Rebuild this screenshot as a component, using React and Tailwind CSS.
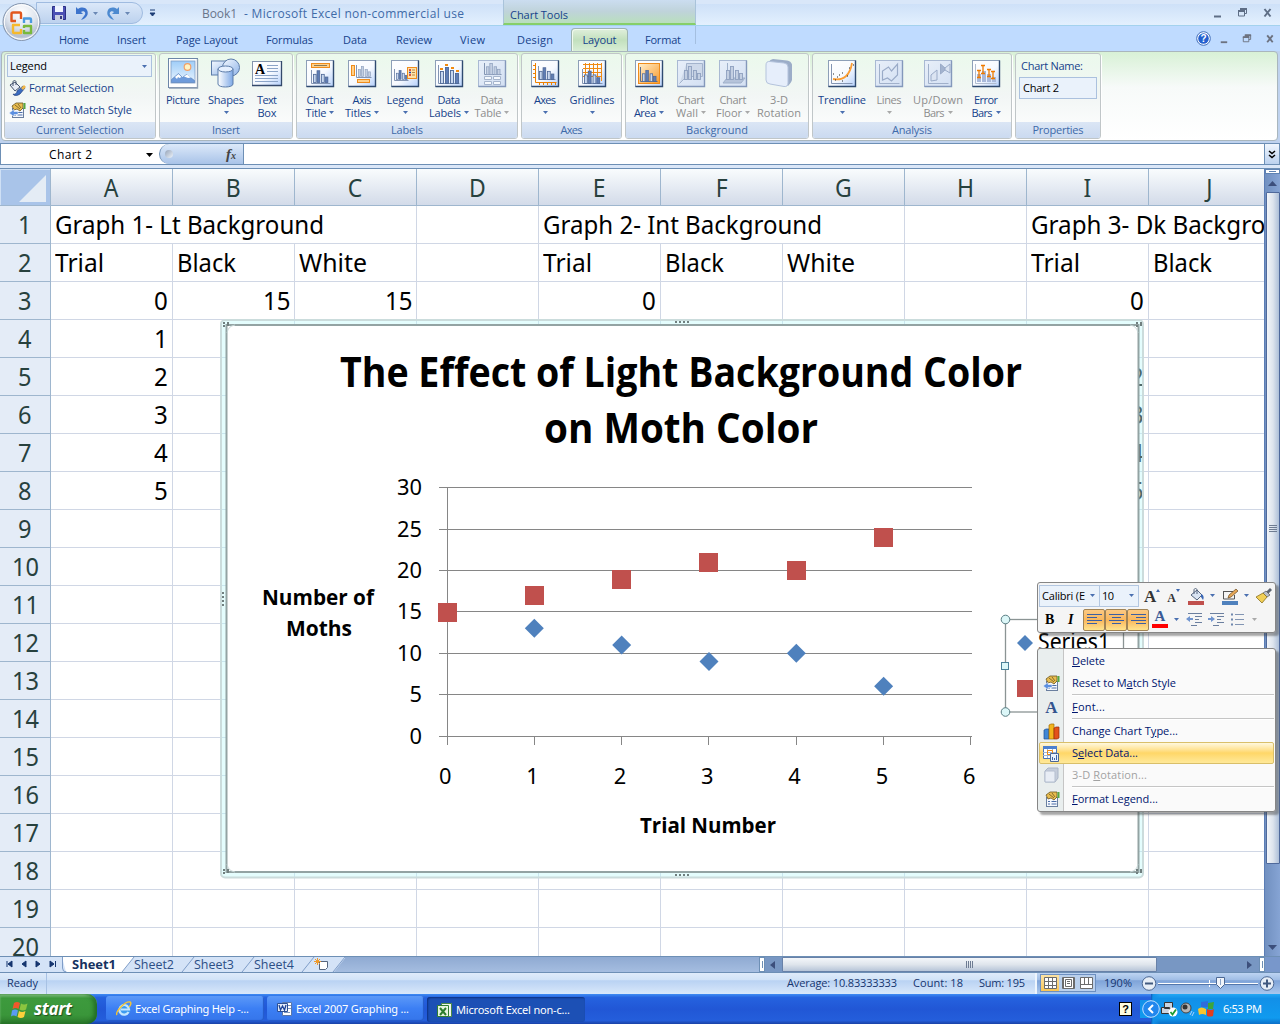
import React, { useLayoutEffect, useRef, useState } from "react";

/* Text that takes up w pixels: by letter spacing, or, with squeeze, by narrowing the glyphs. */
function T({ w, squeeze, children, className = "" }) {
  const ref = useRef(null);
  const [style, setStyle] = useState({});
  useLayoutEffect(() => {
    const el = ref.current;
    const n = el.textContent.length;
    const natural = el.getBoundingClientRect().width;
    if (!w) return;
    if (squeeze) {
      setStyle({ transform: `scaleX(${w / natural})`, transformOrigin: "0 50%", marginRight: w - natural + "px" });
    } else if (n > 1) {
      const ls = (w - natural) / (n - 1);
      setStyle({ letterSpacing: ls + "px", marginRight: -ls + "px" });
    }
  }, []);
  return (
    <span ref={ref} className={"inline-block shrink-0 whitespace-pre " + className} style={style}>
      {children}
    </span>
  );
}

const Down = ({ c = "#4a6fb0", className = "" }) => (
  <svg width="5" height="3" viewBox="0 0 5 3" className={"shrink-0 " + className}>
    <path d="M0 0h5L2.5 3z" fill={c} />
  </svg>
);

/* ---------- ribbon icons ---------- */
function Defs() {
  return (
    <svg width="0" height="0" className="absolute">
      <defs>
        <linearGradient id="face" x1="0" y1="0" x2="1" y2="1">
          <stop offset="0" stopColor="#fff" />
          <stop offset=".55" stopColor="#f7faff" />
          <stop offset="1" stopColor="#b5d0fb" />
        </linearGradient>
        <linearGradient id="dim" x1="0" y1="0" x2="1" y2="1">
          <stop offset="0" stopColor="#e8eff9" />
          <stop offset="1" stopColor="#d3e0f3" />
        </linearGradient>
        <linearGradient id="org" x1="0" y1="0" x2="1" y2="1">
          <stop offset="0" stopColor="#fff0d0" />
          <stop offset="1" stopColor="#f99a2a" />
        </linearGradient>
        <linearGradient id="blu" x1="0" y1="0" x2="1" y2="1">
          <stop offset="0" stopColor="#f4f9ff" />
          <stop offset="1" stopColor="#8fb4e8" />
        </linearGradient>
        <linearGradient id="cyl" x1="0" y1="0" x2="1" y2="0">
          <stop offset="0" stopColor="#fff" />
          <stop offset="1" stopColor="#7ea9e6" />
        </linearGradient>
        <linearGradient id="sky" x1="0" y1="0" x2="0" y2="1">
          <stop offset="0" stopColor="#9fcdf8" />
          <stop offset="1" stopColor="#eaf5ff" />
        </linearGradient>
        <radialGradient id="orb" cx=".5" cy=".25" r=".8">
          <stop offset="0" stopColor="#fff" />
          <stop offset=".5" stopColor="#dfe5ee" />
          <stop offset=".8" stopColor="#b4bfd0" />
          <stop offset="1" stopColor="#f5f8fb" />
        </radialGradient>
      </defs>
    </svg>
  );
}

function Frame({ dim, children }) {
  return (
    <svg width="30" height="29" viewBox="0 0 30 29">
      <rect x="1.5" y="1.5" width="27" height="26" fill={dim ? "url(#dim)" : "url(#face)"} stroke={dim ? "#a9b9d3" : "#8d9fb8"} />
      <path d="M28.5 1.5v26h-27" fill="none" stroke={dim ? "#8498bb" : "#2f4a70"} strokeWidth="1.4" />
      {children}
    </svg>
  );
}

function Bars({ x = 0, y = 0, s = 1, dim, cols = [[0, 9], [4, 13], [9, 9], [13, 6]] }) {
  return (
    <g transform={`translate(${x} ${y}) scale(${s})`}>
      {cols.map(([cx, h], i) => (
        <rect key={i} x={cx + 0.5} y={-h + 0.5} width="3" height={h} fill={dim ? "#c3cfe2" : i % 2 ? "#5f7db5" : "#c9d8ef"} stroke={dim ? "#8fa1bf" : "#4d6796"} strokeWidth=".9" />
      ))}
    </g>
  );
}
const Ax = ({ d, c = "#8395b3" }) => <path d={d} fill="none" stroke={c} strokeWidth="1" />;

const icons = {
  picture: (
    <svg width="32" height="31" viewBox="0 0 32 31">
      <rect x="1.5" y=".5" width="29" height="29" fill="#fff" stroke="#6c86a8" />
      <path d="M30.5 1v29H2" stroke="#8f9fb2" fill="none" strokeWidth="1.4" />
      <rect x="4" y="3" width="24" height="22" fill="url(#sky)" stroke="#7d9cc4" strokeWidth=".8" />
      <circle cx="20.500" cy="9" r="3.300" fill="#fff3c4" stroke="#f2a067" strokeWidth="1.200" />
      <path d="M4.500 24.500v-3l7-6 4 4 4-3 8 6v2z" fill="#6e9bdb" stroke="#5c84bd" strokeWidth=".7" />
      <path d="M8 19l3.500-3 3 3-2 1-1.500-1-1 2zM17 18.500l3-2 4 3-3 .5z" fill="#fff" />
    </svg>
  ),
  shapes: (
    <svg width="32" height="31" viewBox="0 0 32 31">
      <rect x="1.500" y="3" width="19" height="14" fill="url(#blu)" stroke="#5c7ca9" />
      <circle cx="21" cy="9.500" r="8.500" fill="url(#blu)" stroke="#5c7ca9" />
      <path d="M8 11v15c0 4 15 4 15 0V11z" fill="url(#cyl)" stroke="#5c7ca9" />
      <ellipse cx="15.500" cy="11" rx="7.500" ry="3" fill="#e5f0ff" stroke="#5c7ca9" />
    </svg>
  ),
  textbox: (
    <svg width="32" height="31" viewBox="0 0 32 31">
      <rect x="1.500" y="3.500" width="29" height="24" fill="url(#face)" stroke="#8395ad" />
      <path d="M30.500 3v24.500H1" fill="none" stroke="#34496b" strokeWidth="1.300" />
      <text x="4" y="16" fontFamily="Liberation Serif, serif" fontWeight="bold" fontSize="14" fill="#000">A</text>
      <path d="M16 7.500h11M16 10.500h11M16 13.500h11M4 17.500h23M4 20.500h23M4 23.500h23" stroke="#8ba4c8" />
    </svg>
  ),
  chartTitle: (
    <Frame>
      <rect x="6.500" y="4.500" width="18" height="4" fill="#ffd08a" stroke="#ef8c1b" />
      <path d="M9 6.500h13" stroke="#8b7a55" />
      <Ax d="M6.500 11v13.500h19" />
      <Bars x={8} y={23} s={0.9} />
    </Frame>
  ),
  axisTitles: (
    <Frame>
      <rect x="4.500" y="6.500" width="3" height="10" fill="#ffd08a" stroke="#ef8c1b" />
      <rect x="10.500" y="20.500" width="12" height="3" fill="#ffd08a" stroke="#ef8c1b" />
      <Ax d="M9.500 6v12.500h15" />
      <Bars x={11} y={17} s={0.75} dim />
    </Frame>
  ),
  legend: (
    <Frame>
      <Ax d="M4.500 10v11.500h14" />
      <Bars x={6} y={20} s={0.68} />
      <rect x="17.500" y="8.500" width="9" height="11" fill="#ffe2a8" stroke="#ef8c1b" />
      <path d="M19 11h2M19 16h2" stroke="#c22" strokeWidth="1.500" />
      <path d="M19 13.500h2" stroke="#24a" strokeWidth="1.500" />
      <path d="M22 11h3M22 13.500h3M22 16h3" stroke="#b58a4a" />
    </Frame>
  ),
  dataLabels: (
    <Frame>
      <Ax d="M4.500 6v18.500h21" />
      <Bars x={6} y={24} cols={[[0, 12], [5, 16], [10, 13], [15, 10]]} />
      <path d="M6 10h3M11 6h3M17 9h3M22 12h3" stroke="#f28a10" strokeWidth="2" />
    </Frame>
  ),
  dataTable: (
    <Frame dim>
      <Ax d="M7.500 4v11.500h17" />
      <Bars x={9} y={15} s={0.85} dim />
      <path d="M7.500 17.500h7v3h-7zM16.500 17.500h7v3h-7zM7.500 22.500h7v3h-7zM16.500 22.500h7v3h-7z" fill="#f4f8fd" stroke="#a5b4cc" />
    </Frame>
  ),
  axes: (
    <Frame>
      <Ax d="M5.500 4v19.500h21" c="#ee8100" />
      <path d="M3 6.500h3M3 10.500h3M3 14.500h3M3 18.500h3M9.500 23v3M13.500 23v3M17.500 23v3M21.500 23v3M25.500 23v3" stroke="#ee8100" />
      <Ax d="M8.500 7v13.500h17" />
      <Bars x={9} y={20} s={0.9} />
    </Frame>
  ),
  gridlines: (
    <Frame>
      <path d="M6 5.500h19M6 9.500h19M6 13.500h19M6 17.500h19M8.500 4v18M12.500 4v18M16.500 4v18M20.500 4v18M24.500 4v18" stroke="#f08a12" />
      <Ax d="M5.500 10v14.500h20" />
      <Bars x={7} y={24} s={0.95} />
    </Frame>
  ),
  plotArea: (
    <Frame>
      <rect x="4.500" y="4.500" width="21" height="20" fill="url(#org)" stroke="#ef8c1b" />
      <Ax d="M6.500 8v14.500h17" c="#5b6f92" />
      <Bars x={8} y={22} s={0.85} />
    </Frame>
  ),
  wall: (
    <Frame dim>
      <path d="M10.500 4.500h16v13h-16l-7 7M10.500 4.500v13" fill="#ced9ea" stroke="#a3b3cc" />
      <Bars x={8} y={20} s={1} dim />
    </Frame>
  ),
  floor: (
    <Frame dim>
      <path d="M9.500 4v15M9 19h18l-4 5H5z" fill="#b5c3da" stroke="#9fb0ca" />
      <Bars x={8} y={20} s={1} dim />
    </Frame>
  ),
  rot: (
    <svg width="30" height="31" viewBox="0 0 30 31">
      <path d="M5 3.500q1-2 4-2.500l14 1.500q4 .5 5 4v15q0 2-4 6.500l-3-2V8z" fill="#9cadc8" />
      <path d="M6 3.500l14 1.500q4 .5 4 4v16q0 4-4 3.500L6 26q-4-.5-4-4V7q0-4 4-3.500z" fill="#e6eefb" stroke="#b4c3dc" />
    </svg>
  ),
  trend: (
    <Frame>
      <Ax d="M4.500 5v19.500h21" />
      <path d="M6 20c11 2 17-4 19-16" fill="none" stroke="#fb9e35" strokeWidth="1.800" />
      <path d="M6 15h1M10 18h1M15 14h1M8 21h1M15 22h1M20 17h1M22 9h1M12 16h1M26 6h1" stroke="#222" strokeWidth="1.200" />
    </Frame>
  ),
  lines: (
    <Frame dim>
      <Ax d="M5.500 5v19.500h20" c="#a0b0ca" />
      <path d="M8.500 21v-9l6-4 3 4 6-7v11l-6 6-4-3z" fill="none" stroke="#9aabc8" strokeWidth="1.200" />
    </Frame>
  ),
  updown: (
    <Frame dim>
      <Ax d="M5.500 5v19.500h20" c="#a0b0ca" />
      <path d="M8 22v-6l6-5v10z" fill="#dbe4f2" stroke="#9aabc8" />
      <path d="M17.500 5v10l4.500-4V9z" fill="#a3b3cf" stroke="#9aabc8" />
      <path d="M22 9l5-4v9l-5-3z" fill="#dbe4f2" stroke="#9aabc8" />
    </Frame>
  ),
  error: (
    <Frame>
      <Ax d="M4.500 5v19.500h21" c="#b0bccf" />
      <path d="M6 15h4v8H6zM11 12h4v11h-4zM16 15h4v8h-4zM21 18h4v5h-4z" fill="#a9b9da" />
      <path d="M6 11.500h4M8 11v7M6 18.500h4M10 6.500h4M12 6v8M10 14.500h4M16 10.500h4M18 10v7M16 17.500h4M20 12.500h4M22 12v7M20 19.500h4" stroke="#ee7a00" strokeWidth="1.300" />
    </Frame>
  ),
};

/* Hand holding a property sheet, with optional back arrow. */
const PropIcon = ({ arrow }) => (
  <svg width="17" height="17" viewBox="0 0 17 17" className="shrink-0">
    <rect x="3.500" y="6.500" width="11" height="9" fill="#f5f8fd" stroke="#6a7f9f" />
    <path d="M5 10.500h2M5 13h2M8.500 10.500h5M8.500 13h5" stroke="#4a6da8" />
    <path d="M3 4l4-3h7v5l-3 3-3-2-3 1z" fill="#e9bd4f" stroke="#6b5620" strokeWidth=".8" />
    <path d="M6 3l5 4M9 2l3 4" stroke="#6b5620" strokeWidth=".8" />
    <path d="M14.500 1h2v6h-2z" fill="#57a83f" />
    {arrow && <path d="M0 11l5-3.500v2h4v3H5v2z" fill="#5b8fe0" stroke="#fff" strokeWidth=".5" />}
  </svg>
);
const BucketIcon = () => (
  <svg width="17" height="17" viewBox="0 0 17 17" className="shrink-0">
    <path d="M1 5l5-3 5 5-5 4z" fill="#e8eef7" stroke="#44546e" />
    <path d="M4 6V2c0-2 3-2 3 0v3" fill="none" stroke="#44546e" />
    <path d="M8 11l6-5 2 2-5 6c-3 2-6 2-7 0 2 1 4-1 4-3z" fill="#3b6cc0" stroke="#23407c" strokeWidth=".7" />
    <path d="M12 8l3-3 2 2-3 3z" fill="#f0b647" />
  </svg>
);

function Btn({ icon, l1, w1, l2, w2, arrow, off, className }) {
  const c = off ? "text-[#8d8d8d]" : "text-[#15428b]";
  const ac = off ? "#a9a9a9" : "#4a6fb0";
  return (
    <div className={"flex shrink-0 flex-col items-center " + className + " " + c}>
      <div className="flex h-[32px] w-[32px] items-center justify-center">{icons[icon]}</div>
      <div className="mt-[4px] flex h-[13px] items-center leading-[13px]"><T w={w1}>{l1}</T></div>
      <div className="flex h-[13px] items-center gap-[3px] leading-[13px]">
        {l2 && <T w={w2}>{l2}</T>}
        {arrow && <Down c={ac} />}
      </div>
    </div>
  );
}

function Group({ label, w, className, bodyClass = "", children }) {
  return (
    <div className={"flex h-[86px] shrink-0 flex-col overflow-hidden rounded-[3px] border border-[#c0c6c8] bg-gradient-to-b from-[#ebf9ec] via-[#f2f6f5] to-white shadow-[1px_1px_0_#fff] " + className}>
      <div className={"flex min-h-0 flex-1 " + bodyClass}>{children}</div>
      <div className="flex h-[16px] items-center justify-center bg-gradient-to-b from-[#dbe6f5] to-[#cbdaf0] text-[#3e6aaa]"><T w={w}>{label}</T></div>
    </div>
  );
}

const WinBtns = ({ className, c = "#5e6e86" }) => (
  <svg width="62" height="12" viewBox="0 0 62 12" className={className}>
    <path d="M3 9.500h7" stroke={c} strokeWidth="2" />
    <path d="M29.500 1.500h6v5h-2M27.500 4h6v5h-6z" fill="none" stroke={c} />
    <path d="M27 4h7M29 2h7" stroke={c} strokeWidth="2" />
    <path d="M53.500 2l6 7.500M59.500 2l-6 7.500" stroke={c} strokeWidth="2" />
  </svg>
);

function TitleBar() {
  return (
    <div className="flex h-[26px] shrink-0 items-stretch border-b border-[#a3d2ee] bg-gradient-to-b from-[#cadef7] to-[#e3f0fe] shadow-[inset_0_4px_0_#d9e7f9]">
      <div className="ml-[36px] mt-[2px] flex h-[22px] w-[107px] items-center rounded-r-full border border-[#9fbbe0] bg-gradient-to-b from-[#dbe8f9] to-[#bdd2ee] pl-[14px]">
        <svg width="90" height="18" viewBox="0 0 90 18">
          <path d="M1.500 2.500h13v13h-13z" fill="#4b50b4" stroke="#2a2f85" />
          <path d="M4 2h8v6H4z" fill="#eef3ff" />
          <path d="M4 11h8v5H4z" fill="#c9cfe0" />
          <path d="M9 12h2v3H9z" fill="#333a80" />
          <path d="M25 3v7h7l-2-2c3-2 6 1 3 4l-3 4c6-2 8-6 6-10-2-3-6-3-9-1z" fill="#3d74cc" />
          <path d="M42 8h5l-2.500 3zM74 8h5l-2.500 3z" fill="#6a88b5" />
          <path d="M68 3v7h-7l2-2c-3-2-6 1-3 4l3 4c-6-2-8-6-6-10 2-3 6-3 9-1z" fill="#4d8ad0" />
        </svg>
      </div>
      <svg width="7" height="8" viewBox="0 0 7 8" className="ml-[6px] mt-[9px]">
        <path d="M1 1h5M1 4h5L3.500 7z" stroke="#1f3f77" fill="#1f3f77" />
      </svg>
      <div className="ml-[46px] mt-[3px] flex w-[301px] items-center text-[12px]">
        <T w={35} className="text-[#69758b]">Book1</T>
        <T w={220} className="ml-[7px] text-[#3f6ba8]">- Microsoft Excel non-commercial use</T>
      </div>
      <div className="flex w-[193px] items-center border-x border-b-2 border-b-[#86cf69] border-x-[#a9c3da] bg-gradient-to-b from-[#cbddf0] via-[#bfd3da] to-[#b9dfbd] pl-[6px] pt-[6px] text-[#15428b]">
        <T w={58}>Chart Tools</T>
      </div>
      <WinBtns className="ml-auto mr-[7px] mt-[7px]" />
    </div>
  );
}

const tabs = [
  ["Home", 30, "ml-[59px]"],
  ["Insert", 29, "ml-[28px]"],
  ["Page Layout", 62, "ml-[30px]"],
  ["Formulas", 47, "ml-[28px]"],
  ["Data", 24, "ml-[30px]"],
  ["Review", 36, "ml-[29px]"],
  ["View", 25, "ml-[28px]"],
  ["Design", 36, "ml-[32px]"],
];

function TabRow() {
  return (
    <div className="flex h-[25px] shrink-0 items-center bg-[#bfdbff] text-[#15428b]">
      {tabs.map(([t, w, m]) => (
        <div key={t} className={"flex pt-[2px] " + m}><T w={w}>{t}</T></div>
      ))}
      <div className="ml-[18px] mt-[2px] flex h-[23px] w-[57px] items-center justify-center rounded-t-[4px] border border-b-0 border-[#9db3b0] bg-gradient-to-b from-[#e0efdc] via-[#c2e0bd] to-[#d8eed6] shadow-[inset_1px_1px_0_#f1faee]">
        <T w={34}>Layout</T>
      </div>
      <div className="ml-[17px] flex pt-[2px]"><T w={36}>Format</T></div>
      <div className="ml-[14px] h-[18px] w-px self-start bg-[#a4bfe0]" />
      <svg width="15" height="15" viewBox="0 0 15 15" className="ml-auto">
        <circle cx="7.500" cy="7.500" r="6.800" fill="#fff" stroke="#3e6bb8" />
        <circle cx="7.500" cy="7.500" r="5.300" fill="#2460cf" />
        <text x="7.500" y="11" textAnchor="middle" fontFamily="Liberation Sans, sans-serif" fontWeight="bold" fontSize="10" fill="#fff">?</text>
      </svg>
      <WinBtns className="ml-[7px] mr-[5px] w-[57px]" c="#6c7280" />
    </div>
  );
}

function Ribbon() {
  return (
    <div className="flex h-[92px] shrink-0 bg-[#bfd2ee] pb-[2px] pl-px pr-[2px]">
      <div className="flex h-[90px] flex-1 rounded-[4px] border border-[#a9b6bd] bg-gradient-to-b from-[#d8f1d6] via-[#f7faf9] via-40% to-white pl-[2px] pt-[1px]">
        <Group label="Current Selection" w={88} className="w-[152px]" bodyClass="flex-col">
          <div className="ml-[2px] mt-px flex h-[22px] w-[145px] items-center justify-between border border-[#abc1de] bg-[#eaf2fb] pl-[2px] pr-[4px] text-black">
            <T w={37}>Legend</T>
            <Down />
          </div>
          <div className="flex h-[22px] items-center gap-[3px] pl-[4px] text-[#15428b]"><BucketIcon /><T w={85}>Format Selection</T></div>
          <div className="flex h-[22px] items-center gap-[3px] pl-[4px] text-[#15428b]"><PropIcon arrow /><T w={103}>Reset to Match Style</T></div>
        </Group>
        <Group label="Insert" w={28} className="ml-[3px] w-[134px]" bodyClass="pl-[2px] pt-[3px]">
          <Btn icon="picture" className="w-[42px]" l1="Picture" w1={34} />
          <Btn icon="shapes" className="w-[44px]" l1="Shapes" w1={36} arrow />
          <Btn icon="textbox" className="w-[38px]" l1="Text" w1={20} l2="Box" w2={19} />
        </Group>
        <Group label="Labels" w={32} className="ml-[3px] w-[222px]" bodyClass="pl-[2px] pt-[3px]">
          <Btn icon="chartTitle" className="w-[42px]" l1="Chart" w1={27} l2="Title" w2={21} arrow />
          <Btn icon="axisTitles" className="w-[42px]" l1="Axis" w1={19} l2="Titles" w2={26} arrow />
          <Btn icon="legend" className="w-[44px]" l1="Legend" w1={37} arrow />
          <Btn icon="dataLabels" className="w-[44px]" l1="Data" w1={23} l2="Labels" w2={32} arrow />
          <Btn icon="dataTable" className="w-[42px]" l1="Data" w1={23} l2="Table" w2={27} arrow off />
        </Group>
        <Group label="Axes" w={22} className="ml-[3px] w-[101px]" bodyClass="pl-[2px] pt-[3px]">
          <Btn icon="axes" className="w-[42px]" l1="Axes" w1={22} arrow />
          <Btn icon="gridlines" className="w-[52px]" l1="Gridlines" w1={45} arrow />
        </Group>
        <Group label="Background" w={62} className="ml-[3px] w-[184px]" bodyClass="pl-[2px] pt-[3px]">
          <Btn icon="plotArea" className="w-[42px]" l1="Plot" w1={19} l2="Area" w2={22} arrow />
          <Btn icon="wall" className="w-[42px]" l1="Chart" w1={27} l2="Wall" w2={22} arrow off />
          <Btn icon="floor" className="w-[42px]" l1="Chart" w1={27} l2="Floor" w2={26} arrow off />
          <Btn icon="rot" className="w-[50px]" l1="3-D" w1={18} l2="Rotation" w2={44} off />
        </Group>
        <Group label="Analysis" w={40} className="ml-[3px] w-[200px]" bodyClass="pl-[4px] pt-[3px]">
          <Btn icon="trend" className="w-[50px]" l1="Trendline" w1={48} arrow />
          <Btn icon="lines" className="w-[44px]" l1="Lines" w1={25} arrow off />
          <Btn icon="updown" className="w-[54px]" l1="Up/Down" w1={50} l2="Bars" w2={21} arrow off />
          <Btn icon="error" className="w-[42px]" l1="Error" w1={24} l2="Bars" w2={21} arrow />
        </Group>
        <Group label="Properties" w={51} className="ml-[3px] w-[86px]" bodyClass="flex-col pl-[3px]">
          <div className="flex h-[23px] items-center pl-[2px] pt-[1px] text-[#15428b]"><T w={62}>Chart Name:</T></div>
          <div className="flex h-[22px] w-[78px] items-center border border-[#abc1de] bg-[#eaf2fb] pl-[3px] text-black"><T w={36}>Chart 2</T></div>
        </Group>
      </div>
    </div>
  );
}

function FormulaBar() {
  return (
    <div className="flex h-[26px] shrink-0 flex-col bg-[#dbe7f8]">
      <div className="flex h-[22px] border-y border-[#6d8fb5] bg-white text-[12px]">
        <div className="flex w-[159px] items-center border-l border-[#6d8fb5] pl-[48px] pt-px text-black">
          <T w={43}>Chart 2</T>
          <svg width="7" height="4" viewBox="0 0 7 4" className="ml-auto mr-[6px]"><path d="M0 0h7L3.500 4z" fill="#000" /></svg>
        </div>
        <div className="flex w-[85px] items-center rounded-l-full border-r border-l border-[#6d8fb5] bg-gradient-to-b from-[#dce9f9] to-[#a9c3e8] pl-[5px]">
          <div className="h-[8px] w-[8px] rounded-full bg-gradient-to-br from-[#95a3b8] to-[#f0f5fb]" />
          <span className="ml-auto mr-[7px] font-['Liberation_Serif',serif] text-[15px] font-bold italic leading-none text-[#444]">f<span className="text-[10px]">x</span></span>
        </div>
        <div className="ml-auto flex w-[16px] items-center justify-center border-x border-[#6d8fb5] bg-gradient-to-b from-[#f0f6fd] to-[#bcd2ef]">
          <svg width="8" height="9" viewBox="0 0 8 9"><path d="M1 1l3 2.500L7 1M1 5l3 2.500L7 5" fill="none" stroke="#000" strokeWidth="1.500" /></svg>
        </div>
      </div>
      <div className="mt-[3px] h-px bg-[#6d8fb5]" />
    </div>
  );
}

/* ---------- worksheet ---------- */
const columns = ["A", "B", "C", "D", "E", "F", "G", "H", "I", "J"];
const rows = Array.from({ length: 20 }, (_, i) => i + 1);
const cellText = {
  2: { A: ["Trial", 49], B: ["Black", 59], C: ["White", 68], E: ["Trial", 49], F: ["Black", 59], G: ["White", 68], I: ["Trial", 49], J: ["Black", 59] },
};
const nums = {
  3: { A: "0", B: "15", C: "15", E: "0", I: "0" },
  4: { A: "1", I: "1" },
  5: { A: "2", I: "2" },
  6: { A: "3", I: "3" },
  7: { A: "4", I: "4" },
  8: { A: "5", I: "5" },
};
const cellBase = "flex h-[38px] shrink-0 items-center overflow-hidden border-b border-r border-[#d0d7e5] ";

function Sheet() {
  return (
    <div className="flex w-[1264px] flex-col overflow-hidden bg-white font-['Noto_Sans',sans-serif] text-[25.500px]">
      <div className="flex h-[37px] shrink-0 leading-none text-[#27413e]">
        <div className="flex w-[51px] shrink-0 items-end justify-end border-b border-r border-[#9eb6ce] bg-[#a9c4e9] pb-[3px] pr-[4px] shadow-[inset_1px_1px_0_#cfe0f5]">
          <svg width="27" height="27" viewBox="0 0 27 27"><path d="M27 0v27H0z" fill="#e4ecf5" /></svg>
        </div>
        {columns.map((c) => (
          <div key={c} className="flex w-[122px] shrink-0 items-center justify-center border-b border-r border-[#9eb6ce] bg-gradient-to-b from-[#f9fcfd] to-[#d3dbe9] pt-[2px]"><span className="scale-x-90">{c}</span></div>
        ))}
      </div>
      {rows.map((r) => (
        <div key={r} className="flex h-[38px] shrink-0 leading-none">
          <div className="flex w-[51px] shrink-0 items-center justify-center border-b border-r border-[#9eb6ce] bg-[#e4ecf7] pt-px text-[#27413e]"><T squeeze w={r > 9 ? 27 : 13.5}>{String(r)}</T></div>
          {r === 1 ? (
            <>
              <div className={cellBase + "w-[366px] pl-[4px] pt-px"}><T squeeze w={269}>Graph 1- Lt Background</T></div>
              <div className={cellBase + "w-[122px]"} />
              <div className={cellBase + "w-[366px] pl-[4px] pt-px"}><T squeeze w={279}>Graph 2- Int Background</T></div>
              <div className={cellBase + "w-[122px]"} />
              <div className={cellBase + "w-[366px] pl-[4px] pt-px"}><T squeeze w={279}>Graph 3- Dk Background</T></div>
            </>
          ) : (
            columns.map((c) => {
              const t = cellText[r]?.[c];
              const n = nums[r]?.[c];
              return (
                <div key={c} className={cellBase + "w-[122px] px-[4px] pt-px " + (n ? "justify-end" : "")}>
                  {t && <T squeeze w={t[1]}>{t[0]}</T>}
                  {n && <T squeeze w={n.length > 1 ? 27.5 : 13.8}>{n}</T>}
                </div>
              );
            })
          )}
        </div>
      ))}
    </div>
  );
}

function VScroll() {
  return (
    <div className="flex w-[16px] flex-col items-center border-l border-[#5b7db5] bg-gradient-to-r from-[#7190c0] to-[#86a4d4]">
      <div className="flex h-[5px] w-full items-center border border-[#5f83b3] bg-white px-[3px]"><div className="h-px w-full bg-[#5f83b3]" /></div>
      <svg width="9" height="5" viewBox="0 0 9 5" className="mt-[7px]"><path d="M0 5h9L4.500 0z" fill="#3c4f7c" /></svg>
      <div className="mt-[6px] flex h-[672px] w-[14px] flex-col items-center justify-center gap-px rounded-[1px] border border-[#4f699b] bg-gradient-to-r from-[#f2f5f9] via-[#dde4ed] to-[#adbfd8]">
        <div className="h-px w-[8px] bg-[#6e7c92]" />
        <div className="h-px w-[8px] bg-[#6e7c92]" />
        <div className="h-px w-[8px] bg-[#6e7c92]" />
        <div className="h-px w-[8px] bg-[#6e7c92]" />
      </div>
      <svg width="9" height="5" viewBox="0 0 9 5" className="mb-[6px] mt-auto"><path d="M0 0h9L4.500 5z" fill="#3c4f7c" /></svg>
    </div>
  );
}

/* ---------- chart object ---------- */
const X = (v) => 447 + v * 87.33;
const Y = (v) => 736 - v * 8.28;
const white = [15, 17, 19, 21, 20, 24];
const black = [null, 13, 11, 9, 10, 6];

function Chart() {
  const label = { fontFamily: "Noto Sans, sans-serif", fontSize: 22 };
  const bold = { fontFamily: "Open Sans, Noto Sans, sans-serif", fontWeight: 700 };
  return (
    <svg width="924" height="560" viewBox="220 319 924 560" className="absolute left-[220px] top-[150px]">
      <rect x="221" y="320" width="922" height="557.500" rx="4" fill="#bffbfb" fillOpacity=".42" stroke="#cbdcdc" strokeWidth="2" />
      <rect x="226.500" y="325" width="912" height="547" fill="#fff" stroke="#93a3a3" strokeWidth="2" />
      <path d="M227 333q1-7 8-8M1130 325q7 1 8 8M227 864q1 7 8 8M1130 872q7-1 8-8" fill="none" stroke="#c5d6d6" />
      {[[223, 322], [1136, 322], [223, 869], [1136, 869]].map(([x, y]) => (
        <path key={x + "-" + y} d={`M${x} ${y + 1}h2m2 0h2M${x} ${y + 4}h2m2 -1h2`} stroke="#707f7f" strokeWidth="2" />
      ))}
      <path d="M675 322h2m2 0h2m2 0h2m2 0h2M675 875h2m2 0h2m2 0h2m2 0h2M223 592v2m0 2v2m0 2v2m0 2v2M1141 592v2m0 2v2m0 2v2m0 2v2" stroke="#707f7f" strokeWidth="2" />
      <text {...bold} fontSize="41" x="340" y="387" textLength="682" lengthAdjust="spacingAndGlyphs">The Effect of Light Background Color</text>
      <text {...bold} fontSize="41" x="544" y="443" textLength="274" lengthAdjust="spacingAndGlyphs">on Moth Color</text>
      <text {...bold} fontSize="22" x="262" y="605" textLength="112" lengthAdjust="spacingAndGlyphs">Number of</text>
      <text {...bold} fontSize="22" x="286" y="636" textLength="66" lengthAdjust="spacingAndGlyphs">Moths</text>
      <text {...bold} fontSize="22" x="640" y="833" textLength="136" lengthAdjust="spacingAndGlyphs">Trial Number</text>
      {[0, 5, 10, 15, 20, 25, 30].map((v) => {
        const y = Math.floor(Y(v)) + 0.5;
        const w = v > 9 ? 25 : 12.5;
        return (
          <g key={v}>
            <path d={`M439 ${y}H972`} stroke="#868686" />
            <text {...label} x={422 - w} y={y + 7} textLength={w} lengthAdjust="spacingAndGlyphs">{v}</text>
          </g>
        );
      })}
      <path d="M447.500 487v258" stroke="#868686" />
      {[0, 1, 2, 3, 4, 5, 6].map((v) => (
        <g key={v}>
          <path d={`M${Math.floor(X(v)) + 0.5} 736v9`} stroke="#868686" />
          <text {...label} x={X(v) - 8} y="784" textLength="12.500" lengthAdjust="spacingAndGlyphs">{v}</text>
        </g>
      ))}
      {black.map((v, i) => v !== null && <path key={i} d={`M${X(i)} ${Y(v) - 9.5}l9.500 9.500l-9.500 9.500l-9.500 -9.500z`} fill="#4f81bd" />)}
      {white.map((v, i) => <rect key={i} x={Math.round(X(i) - 9.5)} y={Math.round(Y(v) - 9)} width="19" height="19" fill="#c0504d" />)}
      <rect x="1005.500" y="619.500" width="118" height="92.500" fill="#fff" stroke="#8b9494" strokeWidth="1.300" />
      <path d="M1025 635l8 8-8 8-8-8z" fill="#4f81bd" />
      <rect x="1017" y="680" width="16" height="17" fill="#c0504d" />
      <text {...label} fontSize="24" x="1038" y="650" textLength="72" lengthAdjust="spacingAndGlyphs">Series1</text>
      <circle cx="1005.500" cy="619.500" r="4.300" fill="#dcf7f8" stroke="#587c82" />
      <circle cx="1005.500" cy="712" r="4.300" fill="#dcf7f8" stroke="#587c82" />
      <rect x="1001.500" y="662.500" width="7" height="7" fill="#dcf7f8" stroke="#4c8199" />
    </svg>
  );
}

const AlignIcon = ({ d }) => (
  <div className="flex h-[22px] w-[22px] items-center justify-center rounded-[2px] border border-[#a08457] bg-gradient-to-b from-[#fbc983] via-[#f9b65b] to-[#fee48f]">
    <svg width="15" height="12" viewBox="0 0 15 12"><path d={d} stroke="#3c5fa3" /></svg>
  </div>
);

function MiniToolbar() {
  return (
    <div className="absolute left-[1037px] top-[413px] flex h-[51px] w-[239px] flex-col rounded-[3px] border border-[#868686] bg-[#f5f5f5] shadow-[3px_3px_2px_rgba(60,60,60,0.45)]">
      <div className="flex h-[24px] items-center text-black">
        <div className="ml-px mt-px flex h-[22px] w-[61px] items-center border border-[#b3c7e1] bg-[#eaf2fb] pl-[2px]"><T w={43}>Calibri (E</T><Down className="ml-[5px]" /></div>
        <div className="mt-px flex h-[22px] w-[39px] items-center justify-between border border-l-0 border-[#b3c7e1] bg-[#eaf2fb] pl-[2px] pr-[4px]"><T w={12}>10</T><Down /></div>
        <span className="ml-[5px] mt-[3px] font-['Liberation_Serif',serif] text-[17px] font-bold leading-none text-[#333]">A</span>
        <svg width="4" height="3" viewBox="0 0 4 3" className="mb-[10px]"><path d="M0 3h4L2 0z" fill="#3c66ad" /></svg>
        <span className="ml-[7px] mt-[6px] font-['Liberation_Serif',serif] text-[12px] font-bold leading-none text-[#333]">A</span>
        <svg width="4" height="3" viewBox="0 0 4 3" className="mb-[10px]"><path d="M0 0h4L2 3z" fill="#3c66ad" /></svg>
        <svg width="17" height="17" viewBox="0 0 17 17" className="ml-[8px] mt-[2px] shrink-0">
          <path d="M3 7l6-5 5 5-5 5z" fill="#d9e4f3" stroke="#55657e" /><path d="M6 6V2c0-2 3-2 3 0v4" fill="none" stroke="#55657e" /><path d="M13 6c3 1 3 4 2 6l-2-3z" fill="#3a67b5" /><path d="M0 13h16v4H0z" fill="#c0504d" />
        </svg>
        <Down className="ml-[5px]" />
        <svg width="17" height="17" viewBox="0 0 17 17" className="ml-[7px] mt-[2px] shrink-0">
          <path d="M1 3.500h10M1.500 3v8h11V7" fill="none" stroke="#555" /><path d="M6 10l1-3 7-6 2 2-7 6z" fill="#e6a757" stroke="#6c4a20" strokeWidth=".7" /><path d="M0 13h16v4H0z" fill="#4f81bd" />
        </svg>
        <Down className="ml-[5px]" />
        <svg width="16" height="16" viewBox="0 0 16 16" className="ml-[7px] mt-px shrink-0">
          <path d="M10 4l4-4 2 2-4 4z" fill="#5d6470" /><path d="M7 5l3-2 4 4-3 2z" fill="#b9bfc9" stroke="#555" strokeWidth=".7" /><path d="M0 9l7-4 4 4-5 6z" fill="#f1cf57" stroke="#8a7020" strokeWidth=".8" />
        </svg>
      </div>
      <div className="flex h-[25px] items-center">
        <span className="ml-[7px] mt-px w-[12px] font-['Liberation_Serif',serif] text-[14px] font-bold text-black">B</span>
        <span className="ml-[11px] mt-px w-[15px] font-['Liberation_Serif',serif] text-[14px] font-bold italic text-black">I</span>
        <AlignIcon d="M0 .5h15M0 3.500h10M0 6.500h15M0 9.500h10" />
        <AlignIcon d="M0 .5h15M3 3.500h9M0 6.500h15M3 9.500h9" />
        <AlignIcon d="M0 .5h15M5 3.500h10M0 6.500h15M5 9.500h10" />
        <div className="ml-[3px] flex w-[16px] flex-col items-center">
          <span className="h-[11px] font-['Liberation_Serif',serif] text-[15px] font-bold leading-[11px] text-[#3a5a96]">A</span>
          <div className="mt-[2px] h-[4px] w-[16px] bg-[#f00]" />
        </div>
        <Down className="ml-[6px]" />
        <svg width="16" height="13" viewBox="0 0 16 13" className="ml-[7px]"><path d="M2 .5h14M9 3.500h7M9 6.500h4M9 9.500h7M5 12.500h6" stroke="#6b7f9f" /><path d="M0 6l4-3v2h3v2H4v2z" fill="#6f94cf" /></svg>
        <svg width="16" height="13" viewBox="0 0 16 13" className="ml-[6px]"><path d="M2 .5h14M9 3.500h7M9 6.500h4M9 9.500h7M5 12.500h6" stroke="#6b7f9f" /><path d="M7 6L3 3v2H0v2h3v2z" fill="#6f94cf" /></svg>
        <svg width="14" height="13" viewBox="0 0 14 13" className="ml-[7px]"><path d="M4 1.500h9M4 6.500h9M4 11.500h9" stroke="#8295b3" /><path d="M0 1.500h2M0 6.500h2M0 11.500h2" stroke="#6f87ae" strokeWidth="2" /></svg>
        <Down c="#a9a9a9" className="ml-[7px]" />
      </div>
    </div>
  );
}

const menuIcons = {
  reset: <PropIcon arrow />,
  font: <span className="font-['Liberation_Serif',serif] text-[17px] font-bold leading-none text-[#34548e]">A</span>,
  chart: (
    <svg width="17" height="17" viewBox="0 0 17 17">
      <path d="M1 7l2-1h3v10H1z" fill="#3f86d4" stroke="#1c4f93" strokeWidth=".7" />
      <path d="M6 2l2-1h3v15H6z" fill="#f3b51e" stroke="#a26a05" strokeWidth=".7" />
      <path d="M11 5l2-1h3v11l-2 1h-3z" fill="#e3521b" stroke="#96290a" strokeWidth=".7" />
    </svg>
  ),
  data: (
    <svg width="17" height="17" viewBox="0 0 17 17">
      <path d="M.5 1.500h13v12H.5z" fill="#fff" stroke="#4c74b4" /><path d="M0 1h14v3H0z" fill="#4c80cf" />
      <path d="M0 7.500h13M0 10.500h13M4.500 4v9M9.500 4v9" stroke="#9db5d8" /><path d="M4.500 5.500h5v4h-5z" fill="none" stroke="#f08a12" />
      <path d="M7.500 8.500h8v8h-8z" fill="#e9f1fc" stroke="#4a6796" /><path d="M9.500 15v-3M11.500 15v-2M13.500 15v-5" stroke="#3d62a5" />
    </svg>
  ),
  rot: (
    <svg width="15" height="16" viewBox="0 0 15 16"><path d="M1 4l3-3h10v10l-3 4H1z" fill="#c5cddb" stroke="#aab5c7" /><rect x="1" y="4" width="10" height="11" rx="1" fill="#e8edf5" stroke="#b5bfd0" /></svg>
  ),
  format: <PropIcon />,
};

function Item({ icon, w, hot, off, children }) {
  return (
    <div
      className={
        "flex h-[22px] shrink-0 items-center rounded-[2px] border " +
        (hot ? "border-[#d9bf6a] bg-gradient-to-b from-[#fff8dd] via-[#ffd767] to-[#ffe999] " : "border-transparent ") +
        (off ? "text-[#a2a2a2]" : "text-[#00156e]")
      }
    >
      <div className="flex w-[23px] shrink-0 items-center justify-center">{menuIcons[icon]}</div>
      <div className="ml-[9px] flex"><T w={w} className="decoration-from-font underline-offset-1">{children}</T></div>
    </div>
  );
}
const Sep = () => <div className="ml-[33px] h-[2px] shrink-0 border-t border-[#c5c5c5] bg-white" />;

function ContextMenu() {
  return (
    <div className="absolute left-[1037px] top-[479px] flex h-[164px] w-[239px] flex-col rounded-[3px] border border-[#868686] bg-[#fafafa] bg-[linear-gradient(to_right,#e9eeee_25px,#c5c5c5_25px,#c5c5c5_26px,#fafafa_26px)] p-px shadow-[3px_3px_2px_rgba(60,60,60,0.45)]">
      <Item w={33}><u>D</u>elete</Item>
      <Item icon="reset" w={104}>Reset to M<u>a</u>tch Style</Item>
      <Sep />
      <Item icon="font" w={33}><u>F</u>ont...</Item>
      <Sep />
      <Item icon="chart" w={106}>Change Chart T<u>y</u>pe...</Item>
      <Item icon="data" w={66} hot>S<u>e</u>lect Data...</Item>
      <Item icon="rot" w={75} off>3-D <u>R</u>otation...</Item>
      <Sep />
      <Item icon="format" w={86}><u>F</u>ormat Legend...</Item>
    </div>
  );
}

/* ---------- bottom bars ---------- */
const Splitter = () => (
  <div className="flex w-[6px] shrink-0 justify-center border border-[#6d8fb5] bg-white py-[3px]">
    <div className="w-px bg-[#6d8fb5]" />
  </div>
);

function SheetTabs() {
  return (
    <div className="flex h-[17px] shrink-0 border-y border-[#6d8fb5] bg-gradient-to-b from-[#8faad2] to-[#a5bde0] text-[12px] text-[#2c4e85]">
      <svg width="345" height="15" viewBox="0 0 345 15" className="shrink-0">
        <path d="M0 0h346l-12 15H0z" fill="#d4e3f7" />
        <path d="M62 0h72l-12 15H66z" fill="#fff" />
        <path d="M62.500 0v11q0 4 4 4M134 0l-12 15M194 0l-12 15M254 0l-12 15M314 0l-12 15M345 0l-12 15" fill="none" stroke="#7f9dc8" />
        <path d="M7 4v6M12 4v6L8 7zM26 4v6l-4-3zM36 4v6l4-3zM50 4v6l4-3zM55.500 4v6" fill="#15356f" stroke="#15356f" />
        <g fontFamily="Open Sans, sans-serif" fontSize="12" fill="#2c4e85">
          <text x="72" y="12" fontWeight="700" fill="#16325f" textLength="44" lengthAdjust="spacingAndGlyphs">Sheet1</text>
          <text x="134" y="12" textLength="40" lengthAdjust="spacingAndGlyphs">Sheet2</text>
          <text x="194" y="12" textLength="40" lengthAdjust="spacingAndGlyphs">Sheet3</text>
          <text x="254" y="12" textLength="40" lengthAdjust="spacingAndGlyphs">Sheet4</text>
        </g>
        <path d="M319.500 4.500h8v6l-2 2h-6z" fill="#fff" stroke="#55657f" />
        <path d="M317.500 1v7M314 4.500h7M315 2l5 5M320 2l-5 5" stroke="#ef9a2a" />
      </svg>
      <div className="flex-1" />
      <Splitter />
      <div className="flex w-[494px] shrink-0 items-center bg-[#7897c3]">
        <svg width="5" height="8" viewBox="0 0 5 8" className="ml-[5px]"><path d="M5 0v8L0 4z" fill="#3c4f7c" /></svg>
        <div className="ml-[7px] flex h-full w-[375px] items-center justify-center gap-px rounded-[1px] border border-[#6881a8] bg-gradient-to-b from-[#f4f7fa] via-[#dfe5ec] to-[#b7c5d8]">
          <div className="h-[7px] w-px bg-[#6e7c92]" />
          <div className="h-[7px] w-px bg-[#6e7c92]" />
          <div className="h-[7px] w-px bg-[#6e7c92]" />
          <div className="h-[7px] w-px bg-[#6e7c92]" />
        </div>
        <svg width="5" height="8" viewBox="0 0 5 8" className="ml-auto mr-[7px]"><path d="M0 0v8l5-4z" fill="#3c4f7c" /></svg>
      </div>
      <Splitter />
      <div className="w-[15px] shrink-0 bg-[#7897cb]" />
    </div>
  );
}

const ViewBtn = ({ on, d }) => (
  <div className={"flex w-[18px] items-center justify-center " + (on ? "bg-gradient-to-b from-[#fce3a4] to-[#f9c553]" : "")}>
    <svg width="13" height="12" viewBox="0 0 13 12"><path d="M.5 .5h12v11H.5z" fill="#fff" stroke="#6b6b6b" /><path d={d} stroke="#6b6b6b" fill="none" /></svg>
  </div>
);

function StatusBar() {
  return (
    <div className="flex h-[21px] shrink-0 items-stretch bg-[linear-gradient(#dfebfa,#d0e2f7_35%,#b9d2f3_36%,#d9e8fa)] text-[#15356f]">
      <div className="flex w-[47px] items-center border-r border-[#a7c1e4] pb-[2px] pl-[7px]"><T w={31}>Ready</T></div>
      <div className="ml-[740px] flex items-center pb-[2px]"><T w={110}>Average: 10.83333333</T></div>
      <div className="ml-[16px] flex items-center pb-[2px]"><T w={50}>Count: 18</T></div>
      <div className="ml-[16px] flex items-center pb-[2px]"><T w={46}>Sum: 195</T></div>
      <div className="ml-auto flex w-[245px] items-center border-l-2 border-[#eef5fd] bg-[linear-gradient(#bdd4f2,#9dbbe4_35%,#7ea3d8_36%,#a9c7ee)] pb-px">
        <div className="ml-[3px] flex h-[18px] w-[56px] border border-[#6c8fc0] bg-[#bad0ec]">
          <ViewBtn on d="M0 4.500h12M0 8.500h12M4.500 0v12M8.500 0v12" />
          <ViewBtn d="M3.500 2.500h6v7h-6zM5 4.500h3M5 6.500h3M1.500 1v10M11.500 1v10" />
          <ViewBtn d="M4.500 0v7M8.500 0v7M0 7.500h12" />
        </div>
        <div className="ml-[8px] flex"><T w={28}>190%</T></div>
        <svg width="136" height="19" viewBox="0 0 136 19" className="ml-[8px]">
          <path d="M18 9.500h100M69.500 6v7" stroke="#fff" /><path d="M18 10.500h100" stroke="#5377ac" />
          <circle cx="9" cy="9.500" r="6.800" fill="#e6edf6" stroke="#4c6894" /><path d="M5 9.500h8" stroke="#41597f" strokeWidth="2" />
          <circle cx="127" cy="9.500" r="6.800" fill="#e6edf6" stroke="#4c6894" /><path d="M123 9.500h8M127 5.500v8" stroke="#41597f" strokeWidth="2" />
          <path d="M76.500 3.500h8v7l-4 4-4-4z" fill="#f1f5fa" stroke="#4c6894" /><path d="M80.500 5v6" stroke="#8ba4c8" />
        </svg>
      </div>
    </div>
  );
}

function Task({ active, w, icon, children, className }) {
  return (
    <div
      className={
        "flex h-[25px] shrink-0 items-center rounded-[3px] pl-[10px] text-[11px] text-white " + className + " " +
        (active ? "bg-[#1c50b5] shadow-[inset_1px_1px_2px_#0c2f80]" : "bg-gradient-to-b from-[#5c99f8] via-[#3c7ff4] to-[#3575ea] shadow-[inset_-1px_-1px_1px_#2459c8]")
      }
    >
      <div className="mr-[2px] w-[17px] shrink-0">{icon}</div>
      <T w={w}>{children}</T>
    </div>
  );
}

function Taskbar() {
  return (
    <div className="flex h-[30px] shrink-0 items-start bg-[linear-gradient(#3f8cf3,#2562df_12%,#2157d6_50%,#245edb_88%,#1941a5)] font-['Noto_Sans',sans-serif]">
      <div className="flex h-[30px] w-[97px] items-center rounded-r-[10px] bg-[linear-gradient(#6cb56a,#3d9a3d_15%,#3a963a_70%,#2b782b)] pl-[11px] shadow-[inset_-3px_0_4px_#1f6a22,inset_0_2px_2px_#8fd08c]">
        <svg width="19" height="18" viewBox="0 0 19 18">
          <path d="M3 3q3-2 6 0L7.500 9q-3-2-6 0z" fill="#f0582c" /><path d="M10 3.500q3 2 6.500 0L15 9.500q-3 2-6.500 0z" fill="#8bc53f" />
          <path d="M1 10.500q3-2 6 0l-1.500 6q-3-2-5.500 0z" fill="#5a9bf2" /><path d="M8 11q3 2 6.500 0L13 17q-3 2-6.500 0z" fill="#fcd03c" />
        </svg>
        <T w={38} className="ml-[4px] pb-[2px] font-['Open_Sans',sans-serif] text-[17px] font-bold italic leading-none text-white [text-shadow:1px_1px_1px_#1d4f1d]">start</T>
      </div>
      <Task className="ml-[9px] mt-[2px] w-[158px]" w={114} icon={
        <svg width="16" height="16" viewBox="0 0 16 16"><circle cx="8.500" cy="8.500" r="6" fill="#3d9bf0" /><path d="M12.500 11A4.800 4.800 0 1 1 13 8.500H5" fill="none" stroke="#c4e6ff" strokeWidth="2.200" /><path d="M1 14c-2-3 8-14 13-13 2 1 0 4-1 5" fill="none" stroke="#f7c531" strokeWidth="1.400" /></svg>
      }>Excel Graphing Help -...</Task>
      <Task className="ml-[3px] mt-[2px] w-[157px]" w={113} icon={
        <svg width="16" height="16" viewBox="0 0 16 16"><path d="M5.500 1.500h9v13h-9z" fill="#fff" stroke="#5a76a8" /><path d="M7 11.500h6M11 4.500h3M11 7.500h3" stroke="#7c94bd" /><path d="M.500 2.500h10v8H.500z" fill="#e3ecfa" stroke="#2b4f94" /><path d="M2 4l1.500 5 2-4 2 4L9 4" fill="none" stroke="#1e4599" strokeWidth="1.300" /></svg>
      }>Excel 2007 Graphing ...</Task>
      <Task active className="ml-[3px] mt-[3px] w-[158px]" w={114} icon={
        <svg width="16" height="16" viewBox="0 0 16 16"><path d="M4.500 1.500h10v13h-10z" fill="#eff7ec" stroke="#4b8a45" /><path d="M.500 3.500h11v11H.500z" fill="#e6f3e0" stroke="#2f7d32" /><path d="M3 6l6 7M9 6l-6 7" stroke="#2c7d2e" strokeWidth="2" /></svg>
      }>Microsoft Excel non-c...</Task>
      <svg width="13" height="14" viewBox="0 0 13 14" className="ml-auto mr-[8px] mt-[8px]">
        <rect x=".5" y=".5" width="12" height="13" fill="#fffde0" stroke="#000" /><text x="6.500" y="11" textAnchor="middle" fontFamily="Liberation Sans, sans-serif" fontWeight="bold" fontSize="11" fill="#000">?</text>
      </svg>
      <div className="flex h-[30px] w-[140px] items-center bg-[linear-gradient(to_right,transparent_11px,#0c59b9_11px,#1290e8_13px,transparent_20px),linear-gradient(#24a8f4,#1290e8_15%,#109aef_80%,#0b6fc8)] [clip-path:polygon(11px_0,100%_0,100%_100%,11px_100%,11px_80%,0_80%,0_20%,11px_20%)]">
        <svg width="74" height="20" viewBox="0 0 74 20" className="ml-[2px] shrink-0">
          <circle cx="9" cy="10" r="8.300" fill="#2187ee" stroke="#bfe0ff" /><path d="M11 6l-4 4 4 4" fill="none" stroke="#fff" strokeWidth="2" />
          <path d="M22.500 3.500h8v6h-8zM19.500 8.500h8v6h-8z" fill="#c9d3df" stroke="#333" /><circle cx="31" cy="13" r="4.500" fill="#fff" /><path d="M28.500 13l2 2.500 3.500-5" fill="none" stroke="#1c9b32" strokeWidth="1.800" />
          <circle cx="44" cy="9" r="5" fill="#b5b5b5" stroke="#444" /><circle cx="43" cy="8" r="2.500" fill="#333" /><path d="M50 12l-2 4M52 13l-2 4" stroke="#a9d0ff" />
          <path d="M59 3l7-1v6h-7z" fill="#2f6ddb" /><path d="M66 4l6-1-1 7h-5z" fill="#3da53b" /><path d="M56 10q3-3 8 0v6q-4-2-7 0z" fill="#f7c52e" /><path d="M65 10q4 2 7 0l-1 7q-3 1-6 0z" fill="#e23e1f" />
        </svg>
        <T w={39} className="ml-[7px] text-[11px] text-white">6:53 PM</T>
      </div>
    </div>
  );
}

function Orb() {
  return (
    <svg width="42" height="42" viewBox="0 0 42 42" className="absolute left-[1px] top-[1px]">
      <circle cx="20.500" cy="21" r="18.500" fill="url(#orb)" stroke="#8394ad" />
      <circle cx="20.500" cy="21" r="17.200" fill="none" stroke="#fff" />
      <g fill="none" strokeWidth="2.400" strokeLinejoin="round">
        <path d="M15 20h-4.500v-7q0-1.500 1.500-1.500h7q1 0 1 1.500V18" stroke="#e2571d" />
        <path d="M23 22v-4.500h6q1 0 1 1V22" stroke="#4b9be0" />
        <path d="M19 24h-7v7q0 1 1 1h7v-4" stroke="#f6b92c" />
        <path d="M23 27v-2h7v7h-7v-3" stroke="#79b93c" />
      </g>
    </svg>
  );
}

export default function App() {
  return (
    <div className="relative flex h-[1024px] w-[1280px] flex-col overflow-hidden bg-white font-['Open_Sans',sans-serif] text-[11px] leading-[14px] text-black">
      <Defs />
      <TitleBar />
      <TabRow />
      <Ribbon />
      <FormulaBar />
      <div className="relative flex h-[787px] shrink-0">
        <div className="flex overflow-hidden"><Sheet /></div>
        <VScroll />
        <Chart />
        <ContextMenu />
        <MiniToolbar />
      </div>
      <SheetTabs />
      <StatusBar />
      <Taskbar />
      <Orb />
    </div>
  );
}
